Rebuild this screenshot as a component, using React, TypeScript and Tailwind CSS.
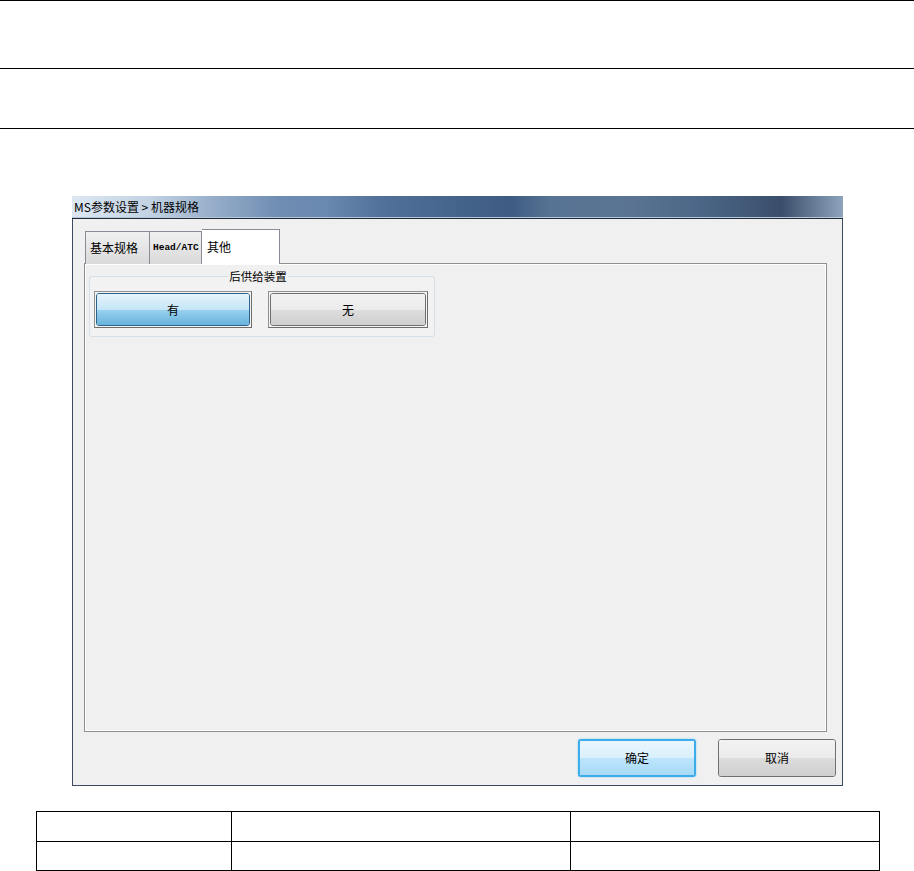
const font = "font-['Noto_Sans_CJK_SC','Liberation_Sans',sans-serif]";

function BlueButton({ label, w, h }: { label: string; w: string; h: string }) {
  return (
    <div className={`${w} ${h} border border-[#8e8f8f] border-r-[#6d6d6d] border-b-[#6d6d6d] p-px bg-[#f4f4f4]`}>
      <div className="h-full w-full rounded-[3px] border border-[#2c628b] flex flex-col overflow-hidden relative">
        <div className="flex-1 bg-gradient-to-b from-[#e5f4fc] to-[#c4e5f6]" />
        <div className="flex-1 bg-gradient-to-b from-[#98d1ef] to-[#68b3db]" />
        <span className="absolute inset-0 flex items-center justify-center text-[12px] text-black">{label}</span>
      </div>
    </div>
  );
}

function GrayButton({ label, w, h }: { label: string; w: string; h: string }) {
  return (
    <div className={`${w} ${h} border border-[#8e8f8f] border-r-[#6d6d6d] border-b-[#6d6d6d] p-px bg-[#f4f4f4]`}>
      <div className="h-full w-full rounded-[3px] border border-[#707070] flex flex-col overflow-hidden relative">
        <div className="flex-1 bg-gradient-to-b from-[#f2f2f2] to-[#ebebeb]" />
        <div className="flex-1 bg-gradient-to-b from-[#dddddd] to-[#cfcfcf]" />
        <span className="absolute inset-0 flex items-center justify-center text-[12px] text-black">{label}</span>
      </div>
    </div>
  );
}

export default function App() {
  return (
    <div className={`w-[914px] h-[871px] bg-white flex flex-col ${font}`}>
      <div className="h-[68px] border-t border-black" />
      <div className="h-[60px] border-t border-black" />
      <div className="h-[68px] border-t border-black" />

      {/* dialog window */}
      <div className="ml-[72px] w-[771px] h-[590px] flex flex-col">
        <div className="h-[21px] flex items-center pl-[2px] text-[12px] text-black bg-[linear-gradient(90deg,#dce7f2_0%,#c3d3e3_10%,#93abc8_19%,#6f8cb2_27%,#6a89b0_33%,#52719a_40%,#45648c_50%,#3e5c83_57%,#577393_62%,#5b7494_72%,#4b6586_82%,#3a4e6b_92%,#8ea3bc_100%)]">
          MS参数设置 &gt; 机器规格
        </div>
        <div className="h-px bg-[#b7c8d9]" />
        <div className="h-px bg-[#1f2a3a]" />
        <div className="flex-1 flex flex-col bg-[#f0f0f0] border-x border-b border-[#3b4a5e] pl-[11px]">
          {/* tabs */}
          <div className="flex items-end h-[45px] -mb-px relative z-10 pl-px">
            <div className="w-[65px] h-[33px] border border-b-0 border-[#898c95] bg-gradient-to-b from-[#f0f0f0] to-[#dadada] flex items-center pl-[4px] text-[12px] text-black">
              基本规格
            </div>
            <div className="w-[52px] h-[33px] border border-l-0 border-b-0 border-[#898c95] bg-gradient-to-b from-[#f0f0f0] to-[#dadada] flex items-center pl-[3px] text-[9.5px] font-bold font-['Liberation_Mono',monospace] text-black">
              Head/ATC
            </div>
            <div className="w-[78px] h-[35px] border border-l-0 border-b-0 border-[#898c95] bg-white flex items-start pt-[8px] pl-[5px] text-[12px] text-black">
              其他
            </div>
          </div>

          {/* tab panel */}
          <div className="w-[743px] h-[469px] border border-[#8e8f8f] shadow-[inset_-1px_-1px_0_#ffffff,inset_1px_1px_0_#ffffff] bg-[#f0f0f0] pt-[12px] pl-[4px]">
            <div className="relative w-[346px] h-[61px] rounded-[3px] border border-[#d5dfe5] bg-[#f2f2f2] flex gap-[16px] pt-[14px] pl-[4px]">
              <span className="absolute left-0 right-[8px] -top-[9px] flex justify-center">
                <span className="bg-[#f0f0f0] px-px text-[11.5px] leading-[16px] text-black">后供给装置</span>
              </span>
              <BlueButton label="有" w="w-[158px]" h="h-[37px]" />
              <GrayButton label="无" w="w-[160px]" h="h-[37px]" />
            </div>
          </div>

          {/* dialog buttons */}
          <div className="flex justify-end gap-[22px] pr-[6px] mt-[7px]">
            <div className="w-[118px] h-[38px] rounded-[3px] border-2 border-[#3cacea] shadow-[0_0_2px_#7ccbf2] flex flex-col overflow-hidden relative">
              <div className="flex-1 bg-gradient-to-b from-[#eaf6fd] to-[#d9f0fc]" />
              <div className="flex-1 bg-gradient-to-b from-[#bee6fd] to-[#a7d9f5]" />
              <span className="absolute inset-0 flex items-center justify-center text-[12px] text-black">确定</span>
            </div>
            <div className="w-[118px] h-[38px] rounded-[3px] border border-[#707070] flex flex-col overflow-hidden relative">
              <div className="flex-1 bg-gradient-to-b from-[#f2f2f2] to-[#ebebeb]" />
              <div className="flex-1 bg-gradient-to-b from-[#dddddd] to-[#cfcfcf]" />
              <span className="absolute inset-0 flex items-center justify-center text-[12px] text-black">取消</span>
            </div>
          </div>
        </div>
      </div>

      {/* table */}
      <table className="ml-[36px] mt-[25px] w-[844px] border-collapse">
        <tbody>
          <tr className="h-[30px]">
            <td className="w-[195px] border border-black" />
            <td className="w-[339px] border border-black" />
            <td className="border border-black" />
          </tr>
          <tr className="h-[29px]">
            <td className="border border-black" />
            <td className="border border-black" />
            <td className="border border-black" />
          </tr>
        </tbody>
      </table>
    </div>
  );
}
